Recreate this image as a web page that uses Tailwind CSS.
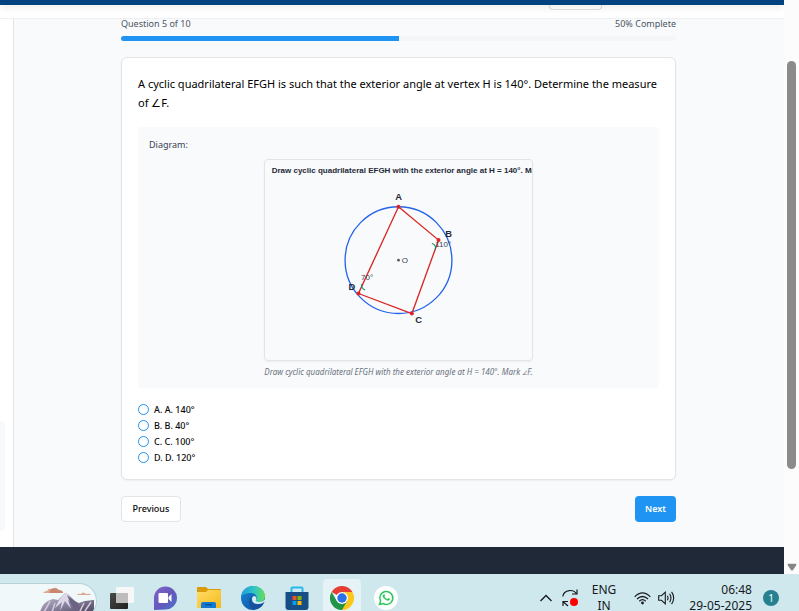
<!DOCTYPE html>
<html lang="en">
<head>
<meta charset="utf-8">
<title>Quiz</title>
<script src="https://cdn.jsdelivr.net/npm/@tailwindcss/browser@4"></script>
</head>
<body class="flex h-screen flex-col overflow-hidden bg-[#f9fafc] font-['Noto_Sans','Open_Sans',sans-serif] text-[#0a0a0a]">
  <div class="flex min-h-0 flex-1">
    <div class="flex min-w-0 flex-1 flex-col">
      <header class="h-[5px] shrink-0 bg-[#00427f] shadow-md z-10"></header>
      <nav class="relative flex h-[14px] shrink-0 justify-center border-b border-[#eef0f2] bg-white">
        <div class="ml-[366px] h-[5px] w-[53px] rounded-b border border-t-0 border-[#dfe1e4]"></div>
      </nav>
      <div class="flex min-h-0 flex-1">
        <aside class="flex w-[14px] shrink-0 flex-col justify-end border-r border-[#e1e4e8] bg-white pb-4">
          <div class="h-[110px] w-[5px] rounded-r bg-[#f8f9fb]"></div>
        </aside>
        <main class="flex-1 pr-px">
          <div class="mx-auto max-w-[555px]">
            <div class="flex h-[17px] justify-between text-[9px] leading-[10px] text-[#4b5563]">
              <span id="progress-label">Question 5 of 10</span>
              <span>50% Complete</span>
            </div>
            <div role="progressbar" aria-labelledby="progress-label" aria-valuenow="50" class="h-[5px] overflow-hidden rounded-full bg-[#f4f5f5]">
              <div class="h-full bg-[#2094f3]" style="width:50%"></div>
            </div>
            <section class="mt-4 rounded-md border border-[#e2e4e8] bg-white p-4 pb-[14px] shadow-xs">
              <h1 class="font-['Noto_Sans','Open_Sans',sans-serif] text-[11px] leading-[19px] font-normal text-black">A cyclic quadrilateral EFGH is such that the exterior angle at vertex H is 140°. Determine the measure of ∠F.</h1>
              <figure class="mt-[15px] rounded bg-[#f8fafb] p-[11px] pb-[9px]">
                <p class="text-[9px] leading-[13px] text-[#374151]">Diagram:</p>
                <div class="mx-auto mt-2 w-[269px] overflow-hidden rounded border border-[#e2e4e8] shadow-xs">
                  <svg viewBox="0 0 400 300" class="block w-full font-['Liberation_Sans',sans-serif]" role="img" aria-label="Cyclic quadrilateral">
                    <text x="10" y="20" font-size="12" font-weight="bold" fill="#1f2937">Draw cyclic quadrilateral EFGH with the exterior angle at H = 140°. Mark ∠F.</text>
                    <circle cx="200" cy="150" r="80" fill="none" stroke="#2563eb" stroke-width="2"/>
                    <path d="M200 70 260 120 220 230 140 200Z" fill="none" stroke="#dc2626" stroke-width="2"/>
                    <path d="M250 125Q257 127 255 134M145 186Q143 191 150 195" fill="none" stroke="#059669" stroke-width="1.5"/>
                    <g fill="#dc2626"><circle cx="200" cy="70" r="3"/><circle cx="260" cy="120" r="3"/><circle cx="220" cy="230" r="3"/><circle cx="140" cy="200" r="3"/></g>
                    <circle cx="200" cy="150" r="2" fill="#4b5563"/>
                    <g font-size="14" font-weight="bold" fill="#1f2937" text-anchor="middle">
                      <text x="200" y="60">A</text><text x="275" y="115">B</text><text x="230" y="244">C</text><text x="130" y="195">D</text>
                    </g>
                    <g font-size="12" fill="#374151">
                      <text x="205" y="155">O</text><text x="255" y="131">110°</text><text x="144" y="180">70°</text>
                    </g>
                  </svg>
                </div>
                <figcaption class="mt-[4px] pb-px text-center text-[8px] leading-[13px] text-[#6b7280] italic">Draw cyclic quadrilateral EFGH with the exterior angle at H = 140°. Mark <span class="text-[6px] leading-none">∠</span>F.</figcaption>
              </figure>
              <div class="mt-[13px] text-[9px] font-medium" role="radiogroup" aria-label="Answers">
                <label class="flex h-4 items-center gap-[5px]"><input type="radio" name="answer" class="size-[11px] appearance-none rounded-full border border-[#2094f3]">A. A. 140°</label>
                <label class="flex h-4 items-center gap-[5px]"><input type="radio" name="answer" class="size-[11px] appearance-none rounded-full border border-[#2094f3]">B. B. 40°</label>
                <label class="flex h-4 items-center gap-[5px]"><input type="radio" name="answer" class="size-[11px] appearance-none rounded-full border border-[#2094f3]">C. C. 100°</label>
                <label class="flex h-4 items-center gap-[5px]"><input type="radio" name="answer" class="size-[11px] appearance-none rounded-full border border-[#2094f3]">D. D. 120°</label>
              </div>
            </section>
            <div class="mt-4 flex justify-between text-[9px]">
              <button class="h-[26px] w-[60px] rounded border border-[#e2e4e8] bg-white pb-[2px] font-medium">Previous</button>
              <button class="h-[26px] w-[41px] rounded bg-[#2094f3] pb-[2px] font-semibold text-white">Next</button>
            </div>
          </div>
        </main>
      </div>
      <footer class="h-[27px] shrink-0 bg-[#1f2937]"></footer>
    </div>
    <div class="flex w-[15px] shrink-0 flex-col items-center justify-between bg-[#fcfcfc] pt-[61px] pb-[3px]">
      <div class="h-[408px] w-[9px] rounded-full bg-[#8b8b8b]"></div>
      <svg viewBox="0 0 10 8" class="w-[10px]"><path d="M1.2.8h7.6q1 .2.6 1.2L6 7Q5 8 4 7L.6 2Q.2 1 1.2.8Z" fill="#858585"/></svg>
    </div>
  </div>

  <div class="flex h-[37px] shrink-0 items-start justify-between overflow-hidden bg-[#cfe8ee] pr-5">
    <div class="flex items-start">
      <div class="mt-[9px] flex h-9 w-[97px] justify-end overflow-hidden rounded-r-full border border-l-0 border-[#b5d2db] bg-[#f0f8fa]">
        <svg viewBox="0 0 57 28" class="h-7 w-[57px]">
          <defs><linearGradient id="mt" x2="1" y2="1"><stop stop-color="#c9c3d8"/><stop offset=".5" stop-color="#8d86a2"/><stop offset="1" stop-color="#4c4660"/></linearGradient></defs>
          <path d="M4 9q1-2 4-2 1-3 5-2 4-3 7 1 4 0 4 3Z" fill="#e0a98d"/><path d="M12 5q5-2 7 1 4 0 5 3H10Z" fill="#c98670"/>
          <path d="M38 11q1-2 4-1 2-3 5 0 4-1 5 1Z" fill="#dda88e"/>
          <path d="M1 28Q4 18 11 16l3-1 5 1 7-7 3 1 7 7 4 2 6-2 9-1v12Z" fill="url(#mt)"/>
          <path d="m26 9-6 7-4 8 7-6-2 9 5-10 6 8-3-9 6 3-6-9Z" fill="#dcd8e8"/>
          <path d="m28 11 3 7 6 10h7l-6-9Z" fill="#6b6284"/><path d="m11 17-3 6-3 5m11-9-3 9m32-9-4 8m11-9-6 9" stroke="#d6cbdc" stroke-width="1.500" fill="none"/>
        </svg>
      </div>
      <svg viewBox="0 0 24 23" class="mt-[13px] ml-[13px] h-[23px] w-6"><defs><linearGradient id="tv" y2="1"><stop stop-color="#4a4a48"/><stop offset="1" stop-color="#20201f"/></linearGradient></defs><rect y="6" width="18" height="16" rx="1" fill="url(#tv)"/><rect x="6" width="18" height="16" rx="1" fill="#f7f7f7"/><path d="M6 6h12v10H6Z" fill="#bdbdbd"/></svg>
      <svg viewBox="0 0 24 24" class="mt-3 ml-[19px] size-6"><defs><linearGradient id="ch" x2="1" y2="1"><stop stop-color="#8461c4"/><stop offset=".55" stop-color="#6258bd"/><stop offset="1" stop-color="#4b75c9"/></linearGradient></defs><path d="M1 24V12A11.500 11.500 0 1 1 12 23.500Z" fill="url(#ch)"/><rect x="5.500" y="7" width="9.500" height="10" rx="1" fill="#fff"/><path d="m15.500 11 3-3v8l-3-3Z" fill="#fff"/></svg>
      <svg viewBox="0 0 24 24" class="mt-3 ml-5 size-6"><defs><linearGradient id="fo" x2="1" y2="1"><stop stop-color="#ffdc67"/><stop offset="1" stop-color="#f6ba1a"/></linearGradient></defs><path d="M0 2q0-1 1-1h8l2 2h12q1 0 1 1v4H0Z" fill="#d99b0c"/><path d="M0 6h9l2-2h12q1 0 1 1v17H0Z" fill="url(#fo)"/><path d="M4 22v-4q0-2 2-2h11q2 0 2 2v4Z" fill="#1479d0"/><path d="M8 18h7v1.500H8Z" fill="#0755a2"/></svg>
      <svg viewBox="0 0 24 24" class="mt-3 ml-5 size-6"><defs><linearGradient id="e1" x2="1"><stop stop-color="#1b9de2"/><stop offset=".6" stop-color="#35c9bc"/><stop offset="1" stop-color="#68dc52"/></linearGradient><linearGradient id="e2" y2="1"><stop stop-color="#1689d8"/><stop offset="1" stop-color="#0d4a96"/></linearGradient></defs><circle cx="12" cy="12" r="12" fill="url(#e2)"/><path d="M0 11C1 4 6 0 12 0c7 0 12 5 12 10 0 4-3 6-6 6-2 0-4-1-3-2 2-4-1-7-5-7C5 7 1 9 0 11Z" fill="url(#e1)"/><path d="M11 10c-3 5 1 11 11 8-1 2-3 4-6 5-7 1-11-8-5-13Z" fill="#174f9d"/><path d="M14 10q-3 0-3 3 0 5 6 5 5 0 7-3v-2q-2 3-6 3c-2 0-4-1-3-2q1-2-1-4Z" fill="#d5edf2"/></svg>
      <svg viewBox="0 0 24 24" class="mt-3 ml-5 size-6"><path d="M6.500 6V2.500q0-1 1-1h9q1 0 1 1V6" fill="none" stroke="#28b8ec" stroke-width="2"/><path d="M.5 6h23v15q0 3-3 3h-17q-3 0-3-3Z" fill="#174e86"/><path d="M7.500 10h4v4h-4Z" fill="#f05123"/><path d="M12.500 10h4v4h-4Z" fill="#7eb900"/><path d="M7.500 15h4v4h-4Z" fill="#00a3ee"/><path d="M12.500 15h4v4h-4Z" fill="#ffb800"/></svg>
      <div class="mt-[5px] ml-[14px] flex h-10 w-[38px] justify-center rounded bg-[#e5f2f6] pt-[7px]">
        <svg viewBox="0 0 24 24" class="size-6"><path d="M12 12 1.600 6A12 12 0 0 1 22.400 6Z" fill="#e63e32"/><path d="M12 12H12V6H22.400A12 12 0 0 1 12 24Z" fill="#fcc61d"/><path d="M1.600 6 6.800 15 12 12 17.200 15 12 24A12 12 0 0 1 1.600 6Z" fill="#229646"/><circle cx="12" cy="12" r="6" fill="#fff"/><circle cx="12" cy="12" r="4.700" fill="#2c70e8"/></svg>
      </div>
      <svg viewBox="0 0 24 24" class="mt-3 ml-[13px] size-6"><circle cx="12" cy="12" r="12" fill="#fff"/><path d="M5.500 18.500 6.600 15A6.500 6.500 0 1 1 9 17.500Z" fill="none" stroke="#2cc65b" stroke-width="1.500"/><path d="M9.500 8.500q1-1 1.500 1l-.5 1q1 2 3 2.500l1-1q2 .5 1.500 1.500-1.500 2-4 .5-3-1.500-3.500-4 0-1 1-1.500Z" fill="#2cc65b"/></svg>
    </div>
    <div class="flex items-start text-[#17191c]">
      <svg viewBox="0 0 12 8" class="mt-5 h-2 w-3" fill="none" stroke="currentColor" stroke-width="1.300"><path d="m.5 7 5.500-5.500L11.500 7"/></svg>
      <svg viewBox="0 0 17 18" class="mt-[15px] ml-[10px] h-[18px] w-[17px]" fill="none" stroke="currentColor" stroke-width="1.200"><path d="M.8 7.500C2 0 12 0 14.500 5M15 .5V5h-5M1 17v-4.500h5M1.500 13 6 17"/><circle cx="12" cy="13" r="4" fill="#f00" stroke="none"/></svg>
      <div class="mt-2 ml-[11px] w-[28px] text-center text-[12px] leading-4">ENG IN</div>
      <svg viewBox="0 0 17 13" class="mt-[18px] ml-[16px] h-[13px] w-[17px]" fill="none" stroke="currentColor" stroke-width="1.200"><path d="M.7 4.800Q8.500-3 16.300 4.800M3 7q5.500-5 11 0M5.300 9.200q3.200-3 6.400 0"/><circle cx="8.500" cy="11" r="1.400" fill="currentColor" stroke="none"/></svg>
      <svg viewBox="0 0 17 14" class="mt-[17px] ml-[7px] h-[14px] w-[17px]" fill="none" stroke="currentColor" stroke-width="1.100"><path d="M.7 4.700H3.500L7.300 1.200v11.600L3.500 9.300H.7ZM9.300 4.700q1.500 2.300 0 4.600M11.600 2.800q2.700 4.200 0 8.400M13.600.9q4.200 6.100 0 12.200"/></svg>
      <div class="mt-2 ml-[11px] w-[66px] text-right text-[12px] leading-4 whitespace-nowrap"><div>06:48</div><div>29-05-2025</div></div>
      <div class="mt-4 ml-[11px] flex size-4 items-center justify-center rounded-full bg-[#258090] text-[10px] text-white">1</div>
    </div>
  </div>
</body>
</html>
